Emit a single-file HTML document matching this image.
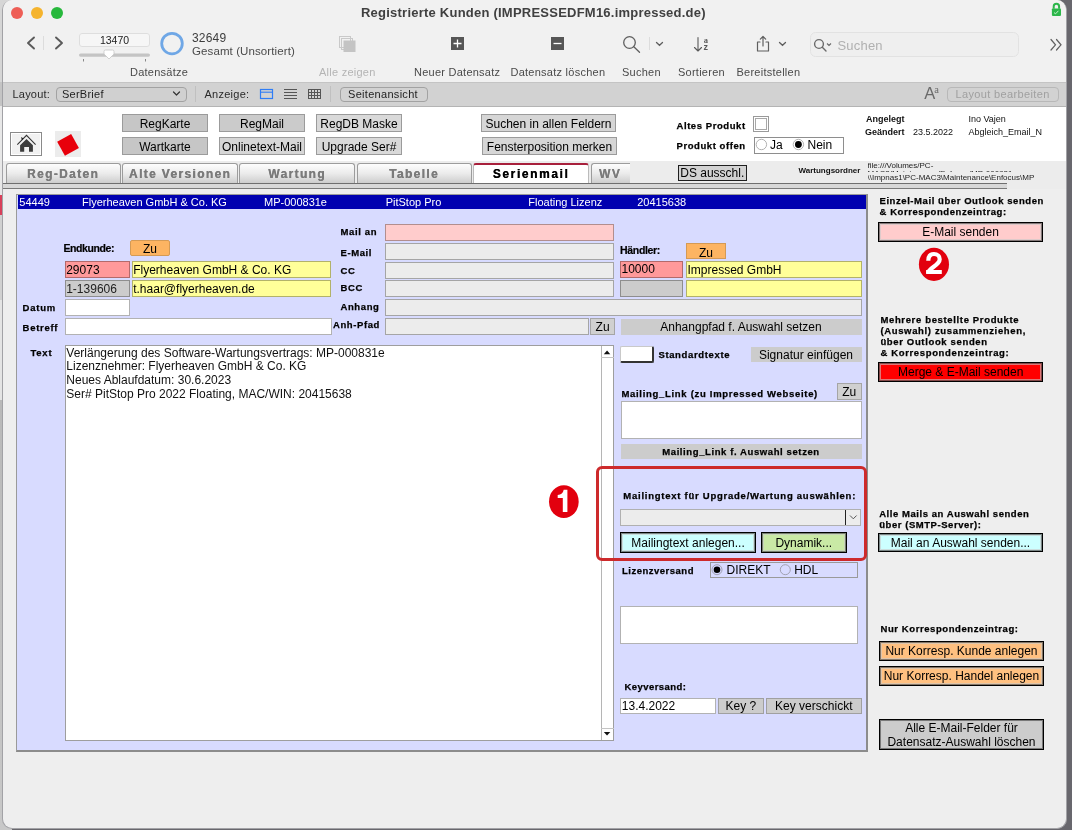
<!DOCTYPE html>
<html><head><meta charset="utf-8">
<style>
*{box-sizing:border-box;margin:0;padding:0}
html,body{width:1072px;height:830px;overflow:hidden;background:#68676d;font-family:"Liberation Sans",sans-serif;}
.a{position:absolute;white-space:nowrap}
#bgwin{position:absolute;left:0;top:0;width:12px;height:830px;background:linear-gradient(#d6d6d6 0,#d6d6d6 82px,#c4c4c4 82px,#c4c4c4 106px,#e8e8e8 106px,#e8e8e8 195px,#d8405a 195px,#d8405a 215px,#d0d0d0 215px,#d0d0d0 300px,#e4e4e4 300px,#e4e4e4 400px,#b9b9b9 400px,#c8c8c8 830px)}
#win{position:absolute;left:2px;top:0;width:1065px;height:829px;background:#eeeeee;border:1px solid #a2a2a6;border-top:none;border-radius:10px;overflow:hidden;will-change:transform}
/* coordinates inside #win are offset by -3 in x; use .g wrapper with left:-3 */
#g{position:absolute;left:-3px;top:0;width:1072px;height:830px}
.lbl{font-weight:bold;font-size:9.5px;letter-spacing:.6px;line-height:11px;color:#000;-webkit-text-stroke:.25px #000}
.fld{position:absolute;border:1px solid rgba(0,0,0,.3);}
.btn{position:absolute;text-align:center;font-size:12px;color:#000;white-space:nowrap;line-height:14px}
.tb{font-size:11px;color:#4a4a4a;letter-spacing:.25px}
.tab{position:absolute;top:163px;height:20px;text-shadow:.35px 0 0 currentColor;border:1px solid #9c9c9c;border-bottom:none;border-radius:3px 3px 0 0;background:linear-gradient(#fdfdfd,#ebebeb 50%,#cdcdcd);font-weight:bold;font-size:12px;letter-spacing:1.35px;color:#7b7b7b;text-align:center;line-height:21px}
</style></head><body>
<div id="bgwin"></div>
<div id="win"><div id="g">
<!-- title/toolbar -->
<div class="a" style="left:0;top:0;width:1072px;height:82px;background:#f1f1f1"></div>
<div class="a" style="left:0;top:82px;width:1072px;height:1px;background:#c4c4c4;z-index:1"></div>
<div class="a" style="left:11px;top:6.5px;width:12px;height:12px;border-radius:50%;background:#ee5e56"></div>
<div class="a" style="left:31px;top:6.5px;width:12px;height:12px;border-radius:50%;background:#f5b42e"></div>
<div class="a" style="left:51px;top:6.5px;width:12px;height:12px;border-radius:50%;background:#27b83c"></div>
<div class="a" style="left:361px;top:4.9px;font-weight:bold;font-size:13px;letter-spacing:.23px;color:#404040">Registrierte Kunden (IMPRESSEDFM16.impressed.de)</div>

<!-- toolbar items -->
<svg class="a" style="left:0;top:0" width="1072" height="82" viewBox="0 0 1072 82">
  <g fill="none" stroke="#5a5a5a" stroke-width="1.9" stroke-linecap="round" stroke-linejoin="round">
    <path d="M34 37.5 L28 43 L34 48.5"/>
    <path d="M56 37.5 L62 43 L56 48.5"/>
  </g>
  <line x1="43.5" y1="36" x2="43.5" y2="50" stroke="#dcdcdc" stroke-width="1"/>
  <!-- record field -->
  <rect x="79.5" y="33.5" width="70" height="13" rx="2.5" fill="#f6f6f6" stroke="#dedede"/>
  <text x="114.5" y="43.8" font-size="10.5" text-anchor="middle" fill="#222" font-family="Liberation Sans">13470</text>
  <rect x="79" y="53.5" width="71" height="3.2" rx="1.6" fill="#c4c4c4"/>
  <line x1="83.5" y1="59" x2="83.5" y2="61.5" stroke="#888" stroke-width="1"/>
  <line x1="145.5" y1="59" x2="145.5" y2="61.5" stroke="#888" stroke-width="1"/>
  <path d="M104 51.5 Q104 50 105.5 50 L112.5 50 Q114 50 114 51.5 L114 54 L109 59 L104 54 Z" fill="#fff" stroke="#c6c6c6" stroke-width="0.8"/>
  <!-- circle -->
  <circle cx="172" cy="43.6" r="10.3" fill="none" stroke="#6fa7e6" stroke-width="2.8"/>
  <!-- alle zeigen icon -->
  <g fill="none" stroke="#c9c9c9" stroke-width="1">
    <rect x="339.5" y="36.5" width="11" height="11"/>
    <rect x="341.5" y="38.5" width="11" height="11"/>
  </g>
  <rect x="343.5" y="40.5" width="12" height="11.5" fill="#c4c4c4"/>
  <!-- plus -->
  <rect x="451" y="37" width="13" height="13" fill="#565656"/>
  <path d="M457.5 39.5 V47.5 M453.5 43.5 H461.5" stroke="#fff" stroke-width="1.3"/>
  <!-- minus -->
  <rect x="551" y="37" width="13" height="13" fill="#565656"/>
  <path d="M553.5 43.5 H561.5" stroke="#fff" stroke-width="1.3"/>
  <!-- search -->
  <g fill="none" stroke="#5f5f5f" stroke-width="1.3" stroke-linecap="round">
    <circle cx="629.5" cy="42.5" r="5.8"/>
    <path d="M633.8 46.8 L639.5 52.3"/>
    <path d="M656.5 42.5 L659.5 45.3 L662.5 42.5"/>
    <path d="M779.5 42.5 L782.5 45.3 L785.5 42.5"/>
  </g>
  <line x1="649.5" y1="37" x2="649.5" y2="50" stroke="#dcdcdc" stroke-width="1"/>
  <!-- sort -->
  <g fill="none" stroke="#5a5a5a" stroke-width="1.1" stroke-linecap="round" stroke-linejoin="round">
    <path d="M698 37.5 V51 M694.5 47.5 L698 51 L701.5 47.5"/>
  </g>
  <text x="703.7" y="42.5" font-size="8.5" font-weight="bold" fill="#5a5a5a" font-family="Liberation Serif">a</text>
  <text x="703.6" y="50" font-size="9" font-weight="bold" fill="#5a5a5a" font-family="Liberation Sans">z</text>
  <!-- share -->
  <g fill="none" stroke="#5f5f5f" stroke-width="1.2" stroke-linecap="round" stroke-linejoin="round">
    <path d="M760 42 H757.5 V51 H768.5 V42 H766"/>
    <path d="M763 46 V36.5 M760.3 39.2 L763 36.5 L765.7 39.2"/>
  </g>
  <!-- search field -->
  <rect x="810.5" y="32.5" width="208" height="24" rx="5" fill="#efefef" stroke="#e2e2e2"/>
  <g fill="none" stroke="#6a6a6a" stroke-width="1.4" stroke-linecap="round">
    <circle cx="819" cy="44" r="4.4"/>
    <path d="M822.3 47.3 L826 51"/>
  </g>
  <path d="M827 43.5 L829 45.5 L831 43.5" fill="none" stroke="#6a6a6a" stroke-width="1.1"/>
  <g fill="none" stroke="#5f5f5f" stroke-width="1.2" stroke-linecap="round">
    <path d="M1051 39.5 L1055.5 44.8 L1051 50"/>
    <path d="M1056.5 39.5 L1061 44.8 L1056.5 50"/>
  </g>
  <!-- lock -->
  <path d="M1053.7 8.8 V6.4 A2.7 2.7 0 0 1 1059.1 6.4 V8.8" fill="none" stroke="#2cb64a" stroke-width="2"/>
  <rect x="1051.9" y="8.5" width="9.1" height="7.4" rx="0.8" fill="#2cb64a"/>
  <path d="M1054 12.6 L1055.6 13.8 L1058.4 10.8" fill="none" stroke="#d8f5dd" stroke-width="0.9"/>
</svg>
<div class="a" style="left:192px;top:31px;font-size:12px;color:#3d3d3d;letter-spacing:.2px">32649</div>
<div class="a tb" style="left:192px;top:45px;font-size:11.5px;letter-spacing:.1px">Gesamt (Unsortiert)</div>
<div class="a tb" style="left:130px;top:66px">Datensätze</div>
<div class="a tb" style="left:319px;top:66px;color:#b4b4b4">Alle zeigen</div>
<div class="a tb" style="left:414px;top:66px">Neuer Datensatz</div>
<div class="a tb" style="left:510.5px;top:66px">Datensatz löschen</div>
<div class="a tb" style="left:622px;top:66px">Suchen</div>
<div class="a tb" style="left:678px;top:66px">Sortieren</div>
<div class="a tb" style="left:736.5px;top:66px">Bereitstellen</div>
<div class="a tb" style="left:837.5px;top:38px;font-size:13px;color:#b0b0b0;letter-spacing:.2px">Suchen</div>

<!-- layout bar -->
<div class="a" style="left:0;top:82px;width:1072px;height:25px;background:#d2d2d2"></div>
<div class="a" style="left:0;top:106px;width:1072px;height:1px;background:#b4b4b4"></div>
<div class="a tb" style="left:12.5px;top:88px;color:#2a2a2a;letter-spacing:.2px">Layout:</div>
<div class="a" style="left:55.5px;top:86.5px;width:131px;height:15px;border:1px solid #a2a2a2;border-radius:4px;background:#d0d0d0"></div>
<div class="a tb" style="left:62px;top:88px;color:#1e1e1e;letter-spacing:.25px">SerBrief</div>
<div class="a tb" style="left:204.5px;top:88px;color:#2a2a2a;letter-spacing:.25px">Anzeige:</div>
<div class="a tb" style="left:348px;top:88px;color:#1e1e1e;letter-spacing:.3px">Seitenansicht</div>
<div class="a" style="left:339.5px;top:86.5px;width:88px;height:15px;border:1px solid #a2a2a2;border-radius:4px"></div>
<div class="a" style="left:947px;top:86.5px;width:111.5px;height:15px;border:1px solid #b8b8b8;border-radius:4px"></div>
<div class="a tb" style="left:955.5px;top:88px;color:#a0a0a0;letter-spacing:.36px">Layout bearbeiten</div>
<svg class="a" style="left:0;top:82px" width="1072" height="24" viewBox="0 82 1072 24">
  <path d="M173.5 92 L176.5 95 L179.5 92" fill="none" stroke="#333" stroke-width="1.2" stroke-linecap="round" stroke-linejoin="round"/>
  <line x1="195.5" y1="86" x2="195.5" y2="102" stroke="#c0c0c0"/>
  <line x1="330.5" y1="86" x2="330.5" y2="102" stroke="#c0c0c0"/>
  <rect x="260.5" y="89.5" width="12" height="9" fill="none" stroke="#2f7df6" stroke-width="1.2"/>
  <line x1="260.5" y1="92.2" x2="272.5" y2="92.2" stroke="#2f7df6" stroke-width="1.1"/>
  <g stroke="#555" stroke-width="1">
    <line x1="284" y1="89.5" x2="297" y2="89.5"/><line x1="284" y1="92.5" x2="297" y2="92.5"/>
    <line x1="284" y1="95.5" x2="297" y2="95.5"/><line x1="284" y1="98.5" x2="297" y2="98.5"/>
  </g>
  <g fill="none" stroke="#555" stroke-width="1">
    <rect x="308.5" y="89.5" width="12" height="9"/>
    <line x1="308.5" y1="92.5" x2="320.5" y2="92.5"/><line x1="308.5" y1="95.5" x2="320.5" y2="95.5"/>
    <line x1="311.5" y1="89.5" x2="311.5" y2="98.5"/><line x1="314.5" y1="89.5" x2="314.5" y2="98.5"/><line x1="317.5" y1="89.5" x2="317.5" y2="98.5"/>
  </g>
  <text x="924.3" y="99" font-size="16.5" fill="#6a6a6a" font-family="Liberation Sans">A</text>
  <text x="934.2" y="93" font-size="10.5" fill="#6a6a6a" font-family="Liberation Serif">a</text>
</svg>

<!-- header white -->
<div class="a" style="left:0;top:107px;width:1072px;height:54px;background:#ffffff"></div>

<!-- header contents -->
<div class="a" style="left:10px;top:132px;width:32px;height:24px;border:1px solid #8a8a8a;background:#f1f1f1;box-shadow:inset 1px 1px 0 #fff,inset -1px -1px 0 #fff"></div>
<svg class="a" style="left:10px;top:132px" width="32" height="24" viewBox="0 0 32 24">
  <path d="M7.3 12.6 L16.5 3.3 L25.6 12.6" fill="none" stroke="#333" stroke-width="1.05"/>
  <path d="M11.1 5 L13.6 6.4 L11.9 8.3 Z" fill="#222"/>
  <path d="M10.1 13.2 L16.5 6.9 L22.9 13.2 V19.7 H19 V14.9 H14.2 V19.7 H10.1 Z" fill="#3b3b3b"/>
</svg>
<div class="a" style="left:55px;top:131px;width:26px;height:26px;background:#ececec"></div>
<div class="a" style="left:60.2px;top:136.6px;width:15.8px;height:15.8px;background:#e8000b;transform:rotate(-29deg)"></div>

<div class="btn" style="left:122px;top:114px;width:86px;height:18px;border:1px solid #9b9b9b;background:#c6c6c6;padding-top:1.74px">RegKarte</div>
<div class="btn" style="left:122px;top:137px;width:86px;height:18px;border:1px solid #9b9b9b;background:#c6c6c6;padding-top:1.74px">Wartkarte</div>
<div class="btn" style="left:219px;top:114px;width:86px;height:18px;border:1px solid #9b9b9b;background:#cbcbcb;padding-top:1.74px">RegMail</div>
<div class="btn" style="left:219px;top:137px;width:86px;height:18px;border:1px solid #9b9b9b;background:#d6d6d6;padding-top:1.74px">Onlinetext-Mail</div>
<div class="btn" style="left:316px;top:114px;width:86px;height:18px;border:1px solid #9b9b9b;background:#d9d9d9;padding-top:1.74px">RegDB Maske</div>
<div class="btn" style="left:316px;top:137px;width:86px;height:18px;border:1px solid #9b9b9b;background:#d9d9d9;padding-top:1.74px">Upgrade Ser#</div>
<div class="btn" style="left:481px;top:114px;width:135px;height:17.5px;border:1px solid #9b9b9b;background:#d6d6d6;padding-top:1.9px">Suchen in allen Feldern</div>
<div class="btn" style="left:482px;top:137px;width:135px;height:17.5px;border:1px solid #9b9b9b;background:#d6d6d6;padding-top:2.0px">Fensterposition merken</div>

<div class="a lbl" style="left:676.5px;top:119.5px;letter-spacing:0.57px">Altes Produkt</div>
<div class="a" style="left:753px;top:116px;width:16px;height:16px;border:1px solid #9a9a9a;background:#fff"></div>
<div class="a" style="left:755px;top:118px;width:12px;height:12px;border:1px solid #a8a8a8"></div>
<div class="a lbl" style="left:676.5px;top:140px;letter-spacing:0.57px">Produkt offen</div>
<div class="a" style="left:754px;top:137px;width:90px;height:17px;border:1px solid #8e8e8e;background:#fff"></div>
<svg class="a" style="left:754px;top:137px" width="90" height="17" viewBox="754 137 90 17">
  <circle cx="761.4" cy="144.5" r="5.2" fill="#fff" stroke="#a8a8a8" stroke-width="0.9"/>
  <circle cx="798.4" cy="144.5" r="5.2" fill="#fff" stroke="#a8a8a8" stroke-width="0.9"/>
  <circle cx="798.4" cy="144.5" r="3.4" fill="#000"/>
</svg>
<div class="a" style="left:770px;top:137.6px;font-size:12px;color:#000">Ja</div>
<div class="a" style="left:807.5px;top:137.6px;font-size:12px;color:#000">Nein</div>

<div class="a" style="left:866px;top:114px;font-size:9px;font-weight:bold;color:#111">Angelegt</div>
<div class="a" style="left:865px;top:126.5px;font-size:9px;font-weight:bold;color:#111">Geändert</div>
<div class="a" style="left:913px;top:126.5px;font-size:9px;color:#111">23.5.2022</div>
<div class="a" style="left:968.4px;top:114px;font-size:9px;color:#111">Ino Vajen</div>
<div class="a" style="left:968.4px;top:126.5px;font-size:9px;color:#111">Abgleich_Email_N</div>

<!-- tab row band -->
<div class="a" style="left:0;top:161px;width:1072px;height:28px;background:#ececec"></div>
<div class="a" style="left:0;top:183px;width:1007px;height:1px;background:#6f6f6f"></div>
<div class="a" style="left:0;top:184px;width:1007px;height:4px;background:#d8d8d8"></div>
<div class="a" style="left:0;top:187.5px;width:1007px;height:1.2px;background:#7a7a7a"></div>
<div class="tab" style="left:5.5px;width:115px">Reg-Daten</div>
<div class="tab" style="left:122px;width:116px">Alte Versionen</div>
<div class="tab" style="left:239px;width:116px">Wartung</div>
<div class="tab" style="left:356.5px;width:115px">Tabelle</div>
<div class="tab" style="left:473px;width:116px;background:#fff;color:#000;border-top:2px solid #a8203c;border-color:#a8203c #bbb #bbb;height:20px;line-height:18.6px;letter-spacing:1.6px;z-index:2">Serienmail</div>
<div class="tab" style="left:591px;width:39px;border-right:none;border-radius:3px 0 0 0;text-align:left;padding-left:7px">WV</div>
<div class="btn" style="left:677.5px;top:164.5px;width:69.5px;height:16.5px;border:1.5px solid #1e1e1e;background:#d2d2d2;padding-top:0px">DS ausschl.</div>
<div class="a" style="left:798.5px;top:165.6px;font-size:8px;font-weight:bold;color:#111">Wartungsordner</div>
<div class="a" style="left:867.5px;top:161.5px;width:190px;height:10.8px;overflow:hidden;font-size:8px;line-height:8.4px;color:#222">file:///Volumes/PC-<br>MAC3/Maintenance/Enfocus/MP-000831e</div><div class="a" style="left:867.5px;top:172.5px;width:190px;height:11px;overflow:hidden;font-size:8px;line-height:9px;color:#222">\\Impnas1\PC-MAC3\Maintenance\Enfocus\MP<br>&nbsp;-000831e</div>

<!-- lavender panel -->
<div class="a" style="left:16px;top:194px;width:852px;height:558px;background:#d8dbff;border:1px solid #9a9a9a;border-right:2px solid #8c8c8c;border-bottom:2px solid #8c8c8c"></div>
<div class="a" style="left:18px;top:195px;width:848px;height:14px;background:#0000b0"></div>
<div class="a" style="left:19.3px;top:196.4px;font-size:11px;color:#fff">54449</div>
<div class="a" style="left:82px;top:196.4px;font-size:11px;color:#fff">Flyerheaven GmbH &amp; Co. KG</div>
<div class="a" style="left:264px;top:196.4px;font-size:11px;color:#fff">MP-000831e</div>
<div class="a" style="left:385.7px;top:196.4px;font-size:11px;color:#fff">PitStop Pro</div>
<div class="a" style="left:528.3px;top:196.4px;font-size:11px;color:#fff">Floating Lizenz</div>
<div class="a" style="left:637.2px;top:196.4px;font-size:11px;color:#fff">20415638</div>

<!-- left fields -->
<div class="a" style="left:63.5px;top:242px;font-size:10.5px;font-weight:bold;color:#000;letter-spacing:-.42px;-webkit-text-stroke:.2px #000">Endkunde:</div>
<div class="btn" style="left:130px;top:240px;width:40px;height:16px;border:1px solid #d49a55;border-radius:2px;background:#fdb462;padding-top:0.84px">Zu</div>
<div class="fld" style="left:65px;top:261px;width:65px;height:17px;background:#ff999a;font-size:12px;line-height:17px;padding-left:.2px">29073</div>
<div class="fld" style="left:132px;top:261px;width:199px;height:17px;background:#ffff99;font-size:12px;line-height:17px;padding-left:.2px">Flyerheaven GmbH &amp; Co. KG</div>
<div class="fld" style="left:65px;top:280px;width:65px;height:17px;background:#cccccc;font-size:12px;line-height:17px;padding-left:.2px;color:#222">1-139606</div>
<div class="fld" style="left:132px;top:280px;width:199px;height:17px;background:#ffff99;font-size:12px;line-height:17px;padding-left:.2px">t.haar@flyerheaven.de</div>
<div class="a lbl" style="left:22.6px;top:302px;letter-spacing:0.75px">Datum</div>
<div class="fld" style="left:65px;top:299px;width:65px;height:17px;background:#fff"></div>
<div class="a lbl" style="left:22.6px;top:322px;letter-spacing:0.7px">Betreff</div>
<div class="fld" style="left:65px;top:318px;width:267px;height:17px;background:#fff"></div>

<!-- middle labels & fields -->
<div class="a lbl" style="left:340.5px;top:226px;letter-spacing:0.65px">Mail an</div>
<div class="fld" style="left:385px;top:224px;width:229px;height:17px;background:#ffcccc"></div>
<div class="a lbl" style="left:340.5px;top:247px">E-Mail</div>
<div class="fld" style="left:385px;top:243px;width:229px;height:16.5px;background:#ececec"></div>
<div class="a lbl" style="left:340.5px;top:265px">CC</div>
<div class="fld" style="left:385px;top:262px;width:229px;height:16.5px;background:#ececec"></div>
<div class="a lbl" style="left:340.5px;top:282.3px">BCC</div>
<div class="fld" style="left:385px;top:280px;width:229px;height:17px;background:#ececec"></div>
<div class="a lbl" style="left:340.5px;top:301.4px">Anhang</div>
<div class="fld" style="left:385px;top:299px;width:477px;height:17px;background:#ececec"></div>
<div class="a lbl" style="left:333px;top:319.3px">Anh-Pfad</div>
<div class="fld" style="left:385px;top:318px;width:204px;height:17px;background:#ececec"></div>
<div class="btn" style="left:590.3px;top:318px;width:24.6px;height:17px;border:1px solid #a5a5a5;background:#d0d0d0;padding-top:1.1px">Zu</div>

<!-- haendler -->
<div class="a" style="left:620px;top:244px;font-size:10.5px;font-weight:bold;color:#000;letter-spacing:-.32px;-webkit-text-stroke:.2px #000">Händler:</div>
<div class="btn" style="left:686px;top:243px;width:40px;height:16px;border:1px solid #d49a55;background:#fdb462;padding-top:1.5px">Zu</div>
<div class="fld" style="left:620px;top:261px;width:63px;height:17px;background:#ff999a;font-size:12px;line-height:15px;padding-left:.5px">10000</div>
<div class="fld" style="left:686px;top:261px;width:176px;height:17px;background:#ffff99;font-size:12px;line-height:16px;padding-left:.5px">Impressed GmbH</div>
<div class="fld" style="left:620px;top:280px;width:63px;height:17px;background:#cccccc"></div>
<div class="fld" style="left:686px;top:280px;width:176px;height:17px;background:#ffff99"></div>
<div class="btn" style="left:620.5px;top:318.7px;width:241px;height:16px;background:#cccccc;padding-top:1.1px">Anhangpfad f. Auswahl setzen</div>

<!-- text area -->
<div class="a lbl" style="left:30.4px;top:347px;letter-spacing:0.8px">Text</div>
<div class="fld" style="left:65px;top:344.5px;width:549px;height:396px;background:#fff;border-color:#9e9e9e"></div>
<div class="a" style="left:66.3px;top:346.6px;font-size:12px;line-height:13.7px;color:#111">Verlängerung des Software-Wartungsvertrags: MP-000831e<br>Lizenznehmer: Flyerheaven GmbH &amp; Co. KG<br>Neues Ablaufdatum: 30.6.2023<br>Ser# PitStop Pro 2022 Floating, MAC/WIN: 20415638</div>
<div class="a" style="left:601px;top:345.5px;width:1px;height:394px;background:#b5b5b5"></div>
<svg class="a" style="left:601px;top:345px" width="13" height="396" viewBox="601 345 13 396">
  <path d="M603.8 354.2 L607.05 350.6 L610.3 354.2 Z" fill="#111"/><line x1="601" y1="357.5" x2="614" y2="357.5" stroke="#c4c4c4"/>
  <path d="M603.8 732 L607.05 735.6 L610.3 732 Z" fill="#111"/><line x1="601" y1="728.5" x2="614" y2="728.5" stroke="#c4c4c4"/>
</svg>

<!-- right column in panel -->
<div class="a" style="left:620.3px;top:346.4px;width:34px;height:16.2px;background:#fff;border:1px solid #c9c9c9;border-right:2px solid #333;border-bottom:2px solid #333;border-radius:2px"></div>
<div class="a lbl" style="left:658.4px;top:349.2px;letter-spacing:0.65px">Standardtexte</div>
<div class="btn" style="left:750.5px;top:347px;width:111px;height:15px;background:#cccccc;padding-top:0.84px">Signatur einfügen</div>
<div class="a lbl" style="left:621.4px;top:387.6px;letter-spacing:0.7px">Mailing_Link (zu Impressed Webseite)</div>
<div class="btn" style="left:837px;top:383px;width:24.5px;height:17px;border:1px solid #a5a5a5;background:#d0d0d0;padding-top:0.74px">Zu</div>
<div class="fld" style="left:620.5px;top:401px;width:241px;height:38px;background:#fff"></div>
<div class="a lbl" style="left:620.5px;top:446.5px;width:241px;height:15px;background:#cccccc;text-align:center;height:15px;line-height:11px;top:443.5px;padding-top:2px;letter-spacing:0.6px">Mailing_Link f. Auswahl setzen</div>

<div class="a lbl" style="left:623.3px;top:489.7px;letter-spacing:0.75px">Mailingtext für Upgrade/Wartung auswählen:</div>
<div class="fld" style="left:620.3px;top:509px;width:241px;height:16.5px;background:#ececec;border-color:#b0b0b0"></div>
<div class="a" style="left:844.5px;top:510px;width:1.2px;height:15px;background:#222"></div>
<svg class="a" style="left:846px;top:510px" width="15" height="15" viewBox="846 510 15 15">
  <path d="M850 515.5 L853.3 518.8 L856.6 515.5" fill="none" stroke="#555" stroke-width="1"/>
</svg>
<div class="btn" style="left:620.3px;top:532px;width:135.5px;height:20.5px;border:1px solid #000;box-shadow:inset 0 0 0 1px rgba(0,0,0,.4),inset 0 0 0 2px rgba(200,200,200,.6);background:#ccffff;padding-top:2.74px">Mailingtext anlegen...</div>
<div class="btn" style="left:761px;top:532px;width:85.5px;height:20.5px;border:1px solid #000;box-shadow:inset 0 0 0 1px rgba(0,0,0,.4),inset 0 0 0 2px rgba(200,200,200,.6);background:#c9e9a5;padding-top:2.74px">Dynamik...</div>

<div class="a" style="left:596px;top:466px;width:271px;height:94.5px;border:3px solid #cd2a2c;border-radius:6px"></div>

<div class="a lbl" style="left:622px;top:565.1px;letter-spacing:0.5px">Lizenzversand</div>
<div class="a" style="left:710.4px;top:562.2px;width:147.4px;height:15.5px;border:1px solid #9a9a9a"></div>
<svg class="a" style="left:710px;top:562px" width="148" height="16" viewBox="710 562 148 16">
  <circle cx="717" cy="569.7" r="5" fill="none" stroke="#9a9aa8" stroke-width="0.9"/>
  <circle cx="717" cy="569.7" r="3.3" fill="#000"/>
  <circle cx="785.3" cy="569.7" r="5" fill="none" stroke="#9a9aa8" stroke-width="0.9"/>
</svg>
<div class="a" style="left:726.6px;top:562.8px;font-size:12px;color:#000">DIREKT</div>
<div class="a" style="left:794.2px;top:562.8px;font-size:12px;color:#000">HDL</div>

<div class="fld" style="left:620.3px;top:606px;width:237.5px;height:37.6px;background:#fff"></div>
<div class="a lbl" style="left:624.4px;top:680.5px;letter-spacing:0.45px">Keyversand:</div>
<div class="fld" style="left:620.3px;top:698px;width:95.5px;height:15.6px;background:#fff;font-size:12px;line-height:14.6px;padding-left:.5px">13.4.2022</div>
<div class="btn" style="left:718px;top:698px;width:45.7px;height:15.6px;border:1px solid #a0a0a0;background:#cccccc;padding-top:0.04px">Key ?</div>
<div class="btn" style="left:765.8px;top:698px;width:96px;height:15.6px;border:1px solid #a0a0a0;background:#cccccc;padding-top:0.04px">Key verschickt</div>

<!-- number badges -->
<svg class="a" style="left:540px;top:480px" width="420" height="45" viewBox="540 480 420 45"></svg>
<svg class="a" style="left:545px;top:482px" width="38" height="40" viewBox="545 482 38 40">
  <ellipse cx="563.85" cy="501.7" rx="14.85" ry="16.4" fill="#e2000e"/>
  <path d="M562.8 512.1 H567.4 V489.8 H563.7 Q562.9 494.6 557.7 494.9 V497.9 H562.8 Z" fill="#fff"/>
</svg>
<svg class="a" style="left:915px;top:245px" width="38" height="40" viewBox="915 245 38 40">
  <ellipse cx="933.95" cy="264.35" rx="15.05" ry="16.55" fill="#e2000e"/>
  <path d="M928.3 260.8 C928.3 256 930.6 254 934 254 C937.4 254 939.7 256.1 939.7 259.2 C939.7 262.3 937.2 264.2 933.4 267 C930.2 269.3 928.3 270.8 928.1 273" fill="none" stroke="#fff" stroke-width="4.2"/>
  <rect x="926.1" y="270" width="15.7" height="4" fill="#fff"/>
</svg>
<!-- right column outside panel -->
<div class="a lbl" style="left:879.5px;top:194.6px;line-height:11px;letter-spacing:0.57px">Einzel-Mail über Outlook senden<br>&amp; Korrespondenzeintrag:</div>
<div class="btn" style="left:878px;top:222px;width:165px;height:20px;border:1px solid #000;box-shadow:inset 0 0 0 1px rgba(0,0,0,.4),inset 0 0 0 2px rgba(200,200,200,.6);background:#ffcccc;padding-top:2.34px">E-Mail senden</div>
<div class="a lbl" style="left:880.4px;top:313.7px;line-height:11px;letter-spacing:0.65px">Mehrere bestellte Produkte<br>(Auswahl) zusammenziehen,<br>über Outlook senden<br>&amp; Korrespondenzeintrag:</div>
<div class="btn" style="left:878.2px;top:362.3px;width:165px;height:19.5px;border:1px solid #000;box-shadow:inset 0 0 0 1px rgba(0,0,0,.4),inset 0 0 0 2px rgba(200,200,200,.6);background:#ff0000;padding-top:2.14px">Merge &amp; E-Mail senden</div>
<div class="a lbl" style="left:879.2px;top:507.8px;line-height:11px;letter-spacing:0.55px">Alle Mails an Auswahl senden<br>über (SMTP-Server):</div>
<div class="btn" style="left:878px;top:533.2px;width:165px;height:19.3px;border:1px solid #000;box-shadow:inset 0 0 0 1px rgba(0,0,0,.4),inset 0 0 0 2px rgba(200,200,200,.6);background:#ccffff;padding-top:1.84px">Mail an Auswahl senden...</div>
<div class="a lbl" style="left:880.5px;top:623px;letter-spacing:0.58px">Nur Korrespondenzeintrag:</div>
<div class="btn" style="left:879px;top:641.2px;width:165px;height:19.6px;border:1px solid #000;box-shadow:inset 0 0 0 1px rgba(0,0,0,.4),inset 0 0 0 2px rgba(200,200,200,.6);background:#ffc080;padding-top:1.94px">Nur Korresp. Kunde anlegen</div>
<div class="btn" style="left:879px;top:666.2px;width:165px;height:19.6px;border:1px solid #000;box-shadow:inset 0 0 0 1px rgba(0,0,0,.4),inset 0 0 0 2px rgba(200,200,200,.6);background:#ffc080;padding-top:2.14px">Nur Korresp. Handel anlegen</div>
<div class="btn" style="left:879px;top:719.3px;width:165px;height:31px;border:1px solid #000;box-shadow:inset 0 0 0 1px rgba(0,0,0,.4),inset 0 0 0 2px rgba(200,200,200,.6);background:#cccccc;padding-top:1px">Alle E-Mail-Felder für<br>Datensatz-Auswahl löschen</div>

</div></div>
</body></html>
